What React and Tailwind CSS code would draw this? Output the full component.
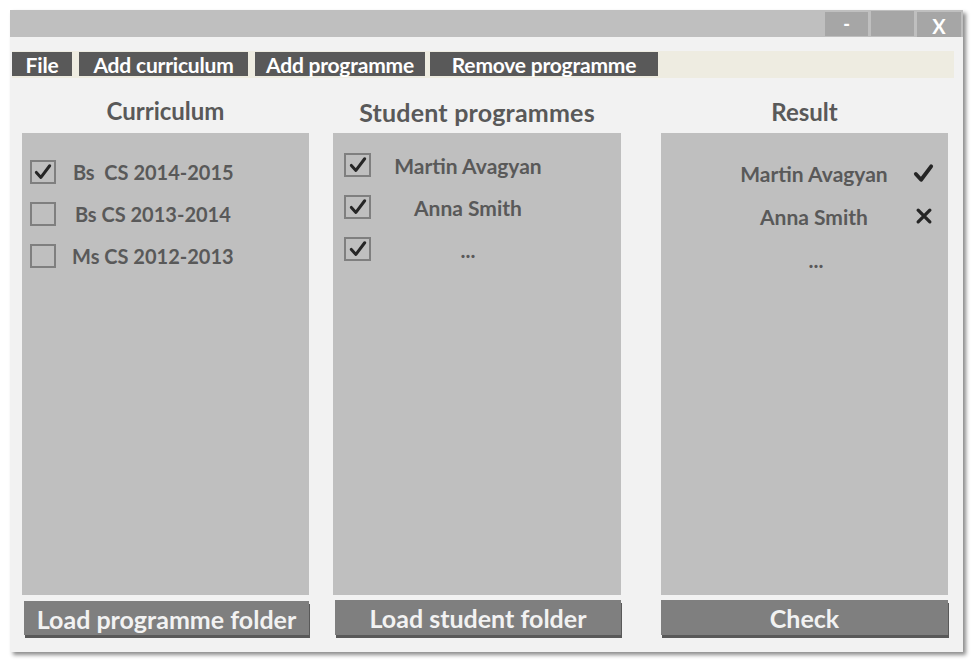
import React from "react";

const Check = ({ className = "", w = 3.6 }) => (
  <svg viewBox="0 0 24 24" className={className}>
    <path d="M4 12.5 L9.5 18.5 L20 4.5" fill="none" stroke="#262626" strokeWidth={w} strokeLinecap="round" strokeLinejoin="round" />
  </svg>
);

const Cross = ({ className = "" }) => (
  <svg viewBox="0 0 24 24" className={className}>
    <path d="M5 5 L19 19 M19 5 L5 19" fill="none" stroke="#262626" strokeWidth="4" strokeLinecap="round" />
  </svg>
);

const Box = ({ checked, className = "" }) => (
  <div className={"border-2 border-[#7f7f7f] flex items-center justify-center shrink-0 " + className}>
    {checked && <Check className="w-[20px] h-[20px]" />}
  </div>
);

export default function App() {
  return (
    <div className="w-[979px] h-[666px] bg-white pt-[10px] pl-[10px] font-['Lato','Liberation_Sans',sans-serif]">
      <div className="w-[953px] h-[642px] bg-[#f2f2f2] shadow-[3px_3px_4px_rgba(0,0,0,0.45)] flex flex-col">
        {/* title bar */}
        <div className="h-[27px] bg-[#bfbfbf] flex justify-end items-start pt-[1px] pr-[2px] gap-[3px]">
          <div className="w-[43px] h-[24px] mt-[1px] bg-[#a6a6a6] flex items-center justify-center text-white font-black text-[18px] leading-none">-</div>
          <div className="w-[43px] h-[25px] bg-[#a6a6a6]"></div>
          <div className="w-[44px] h-[25px] mt-[1px] bg-[#a6a6a6] flex items-end justify-center pb-[1px] text-white font-bold text-[20px] leading-none">X</div>
        </div>
        {/* menu */}
        <div className="mt-[14px] ml-[2px] w-[942px] h-[27px] bg-[#eeece1] flex items-start pt-[1px] text-white font-bold text-[21px] leading-none tracking-[-0.2px]">
          <div className="w-[60px] h-[24px] bg-[#595959] flex items-center justify-center">File</div>
          <div className="ml-[7px] w-[169px] h-[24px] bg-[#595959] flex items-center justify-center">Add curriculum</div>
          <div className="ml-[7px] w-[170px] h-[24px] bg-[#595959] flex items-center justify-center">Add programme</div>
          <div className="ml-[5px] w-[228px] h-[24px] bg-[#595959] flex items-center justify-center">Remove programme</div>
        </div>
        {/* columns */}
        <div className="flex pl-[12px] text-[#595959] font-bold">
          {/* curriculum */}
          <div className="w-[287px] flex flex-col">
            <div className="h-[55px] pt-[11px] flex items-center justify-center text-[24px] leading-none">Curriculum</div>
            <div className="h-[462px] bg-[#bfbfbf] flex flex-col pt-[27px] pl-[8px] gap-[18px] text-[20px] leading-none">
              {[
                ["Bs  CS 2014-2015", true, "ml-[17px]"],
                ["Bs CS 2013-2014", false, "ml-[19px]"],
                ["Ms CS 2012-2013", false, "ml-[16px]"],
              ].map(([t, c, m]) => (
                <div key={t} className="flex items-center h-[24px]">
                  <Box checked={c} className="w-[26px] h-[24px]" />
                  <span className={"whitespace-pre " + m}>{t}</span>
                </div>
              ))}
            </div>
            <div className="mt-[6px] ml-[2px] h-[34px] bg-[#7f7f7f] shadow-[1px_3px_0_#595959] flex items-center justify-center pt-[2px] text-[#f2f2f2] text-[25px] leading-none">Load programme folder</div>
          </div>
          {/* students */}
          <div className="ml-[24px] w-[288px] flex flex-col">
            <div className="h-[55px] pt-[14px] flex items-center justify-center text-[25px] leading-none tracking-[0.2px]">Student programmes</div>
            <div className="h-[462px] bg-[#bfbfbf] flex flex-col pt-[20px] pl-[11px] gap-[18px] text-[21px] leading-none">
              {["Martin Avagyan", "Anna Smith", "..."].map((t) => (
                <div key={t} className="flex items-center h-[24px]">
                  <Box checked className="w-[27px] h-[24px]" />
                  <span className="ml-[2px] w-[190px] text-center">{t}</span>
                </div>
              ))}
            </div>
            <div className="mt-[5px] ml-[2px] h-[35px] bg-[#7f7f7f] shadow-[1px_3px_0_#595959] flex items-center justify-center pt-[2px] text-[#f2f2f2] text-[25px] leading-none">Load student folder</div>
          </div>
          {/* result */}
          <div className="ml-[40px] w-[287px] flex flex-col">
            <div className="h-[55px] pt-[12px] flex items-center justify-center text-[24px] leading-none">Result</div>
            <div className="h-[462px] bg-[#bfbfbf] flex flex-col pt-[28px] pl-[53px] gap-[19px] text-[21px] leading-none">
              <div className="flex items-center h-[24px]">
                <span className="w-[200px] text-center">Martin Avagyan</span>
                <Check className="w-[23px] h-[23px] -ml-[2px]" w={4} />
              </div>
              <div className="flex items-center h-[24px]">
                <span className="w-[200px] text-center">Anna Smith</span>
                <Cross className="w-[20px] h-[20px]" />
              </div>
              <div className="flex items-center h-[24px]">
                <span className="w-[204px] text-center">...</span>
              </div>
            </div>
            <div className="mt-[5px] h-[35px] bg-[#7f7f7f] shadow-[1px_3px_0_#595959] flex items-center justify-center pt-[2px] text-[#f2f2f2] text-[25px] leading-none">Check</div>
          </div>
        </div>
      </div>
    </div>
  );
}
